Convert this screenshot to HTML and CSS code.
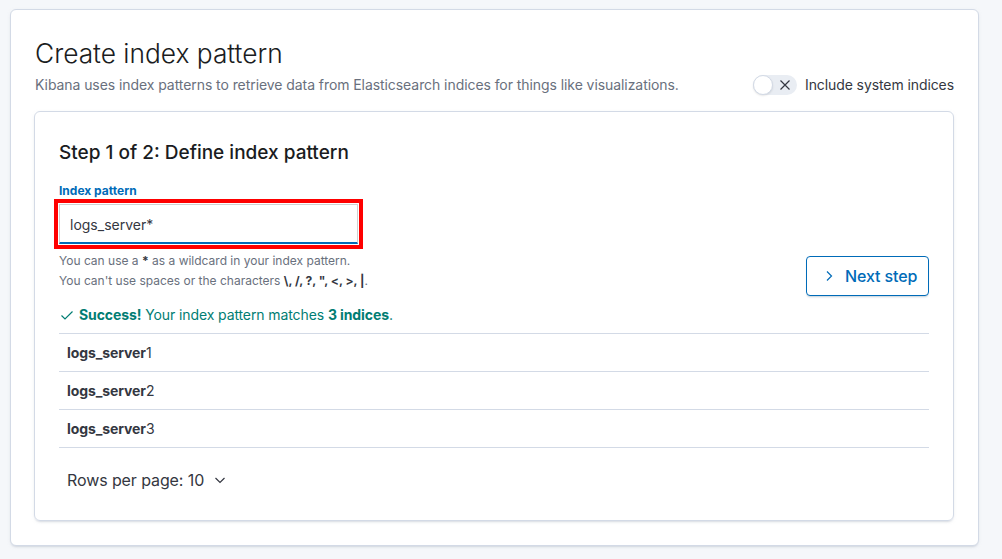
FILE: index.html
```html
<!DOCTYPE html>
<html>
<head>
<meta charset="utf-8">
<link rel="stylesheet" href="styles.css">
</head>
<body>
<div class="page">
  <div class="panel">
    <h1 class="title">Create index pattern</h1>
    <div class="subrow">
      <p class="subtitle">Kibana uses index patterns to retrieve data from Elasticsearch indices for things like visualizations.</p>
      <div class="switch">
        <span class="track">
          <span class="knob"></span>
          <svg class="x" width="12" height="12" viewBox="0 0 12 12"><path d="M1.5 1.5 L10.5 10.5 M10.5 1.5 L1.5 10.5" stroke="#343741" stroke-width="1.2" fill="none"/></svg>
        </span>
        <span class="switch-label">Include system indices</span>
      </div>
    </div>
    <div class="inner">
      <h2 class="step">Step 1 of 2: Define index pattern</h2>
      <div class="formrow">
        <div class="field">
          <label class="label">Index pattern</label>
          <div class="highlight">
            <div class="input">logs_server*</div>
          </div>
          <div class="help first">You can use a <b>*</b> as a wildcard in your index pattern.</div>
          <div class="help">You can't use spaces or the characters <b>\, /, ?, ", &lt;, &gt;, |</b>.</div>
        </div>
        <button class="next">
          <svg width="16" height="16" viewBox="0 0 16 16"><path d="M6 3.5 L10.5 8 L6 12.5" stroke="#006bb8" stroke-width="1.2" fill="none"/></svg>
          <span>Next step</span>
        </button>
      </div>
      <div class="success">
        <svg width="16" height="16" viewBox="0 0 16 16"><path d="M2.5 8.5 L6 12 L13.5 4.5" stroke="#017d73" stroke-width="1.2" fill="none"/></svg>
        <span><b>Success!</b> Your index pattern matches <b>3 indices</b>.</span>
      </div>
      <div class="table">
        <div class="row"><b>logs_server</b>1</div>
        <div class="row"><b>logs_server</b>2</div>
        <div class="row"><b>logs_server</b>3</div>
      </div>
      <div class="pager">
        <span>Rows per page: 10</span>
        <svg width="16" height="16" viewBox="0 0 16 16"><path d="M3.5 6 L8 10.5 L12.5 6" stroke="#343741" stroke-width="1.2" fill="none"/></svg>
      </div>
    </div>
  </div>
</div>
</body>
</html>
```

FILE: styles.css
```css
html, body {
  margin: 0;
  padding: 0;
}
body {
  background: #f5f7fa;
  font-family: Inter, "Liberation Sans", sans-serif;
  color: #343741;
  width: 1002px;
  height: 559px;
  overflow: hidden;
}
.page {
  padding: 9px 0 0 10px;
}
.panel {
  width: 919px;
  height: 487px;
  background: #fff;
  border: 1px solid #d3dae6;
  border-radius: 6px;
  box-shadow: 0 2px 2px -1px rgba(152,162,179,0.3), 0 1px 5px -2px rgba(152,162,179,0.3);
  padding: 24px;
}
.title {
  margin: 0;
  font-size: 26.3px;
  font-weight: 300;
  line-height: 40px;
  color: #1a1c21;
}
.subrow {
  display: flex;
  align-items: center;
  justify-content: space-between;
  margin-top: -1px;
}
.subtitle {
  margin: 0;
  font-size: 14px;
  line-height: 24px;
  color: #69707d;
  letter-spacing: -0.07px;
}
.switch {
  display: flex;
  align-items: center;
  gap: 8px;
}
.track {
  position: relative;
  display: inline-block;
  width: 44px;
  height: 20px;
  border-radius: 10px;
  background: #e9edf3;
}
.knob {
  position: absolute;
  left: 0;
  top: 0;
  width: 18px;
  height: 18px;
  border-radius: 50%;
  background: #fff;
  border: 1px solid #d3dae6;
  box-shadow: 0 1px 2px rgba(0,0,0,0.1);
}
.x {
  position: absolute;
  left: 26px;
  top: 4px;
}
.switch-label {
  font-size: 14px;
  color: #343741;
  line-height: 20px;
  letter-spacing: -0.09px;
}
.inner {
  margin-top: 14px;
  margin-left: -1px;
  border: 1px solid #d3dae6;
  border-radius: 6px;
  box-shadow: 0 2px 2px -1px rgba(152,162,179,0.3), 0 1px 5px -2px rgba(152,162,179,0.3);
  padding: 24px;
  height: 360px;
}
.step {
  margin: 0;
  font-size: 19px;
  font-weight: 500;
  line-height: 32px;
  color: #1a1c21;
  margin-top: 1px;
}
.formrow {
  display: flex;
  align-items: flex-end;
  justify-content: space-between;
  margin-top: 14px;
}
.label {
  display: block;
  font-size: 12px;
  font-weight: 700;
  color: #006bb8;
  line-height: 16px;
}
.highlight {
  margin-top: 0;
  margin-left: -5px;
  width: 301px;
  border: 4px solid #ff0000;
  padding: 0;
}
.input {
  height: 40px;
  box-sizing: border-box;
  border: 1px solid #d0d0d0;
  border-bottom: 2px solid #006bb8;
  padding: 3px 10px 0;
  font-size: 14px;
  line-height: 34px;
  color: #343741;
  margin: 1px;
  background: #fff;
}
.help {
  font-size: 12px;
  line-height: 20px;
  color: #69707d;
}
.help.first {
  margin-top: 2px;
}
.help b {
  color: #343741;
}
.next {
  display: flex;
  align-items: center;
  gap: 8px;
  width: 123px;
  height: 40px;
  box-sizing: border-box;
  border: 1px solid #006bb8;
  border-radius: 4px;
  background: #fff;
  color: #006bb8;
  font-family: Inter, "Liberation Sans", sans-serif;
  font-size: 16px;
  font-weight: 500;
  padding: 0 0 0 14px;
  margin-bottom: -5px;
  letter-spacing: -0.1px;
  box-shadow: 0 2px 2px -1px rgba(54,97,126,0.3);
}
.success {
  display: flex;
  align-items: center;
  gap: 4px;
  margin-top: 14px;
  font-size: 14px;
  line-height: 20px;
  color: #017d73;
  letter-spacing: -0.1px;
}
.table {
  margin-top: 8px;
  border-top: 1px solid #d3dae6;
}
.row {
  height: 37px;
  border-bottom: 1px solid #d3dae6;
  display: flex;
  align-items: center;
  padding-left: 8px;
  font-size: 14px;
  color: #343741;
  letter-spacing: -0.1px;
}
.row b {
  font-weight: 700;
}
.pager {
  display: flex;
  align-items: center;
  gap: 8px;
  margin-top: 22px;
  padding-left: 8px;
  font-size: 16px;
  line-height: 20px;
  color: #343741;
  letter-spacing: -0.1px;
}
```
